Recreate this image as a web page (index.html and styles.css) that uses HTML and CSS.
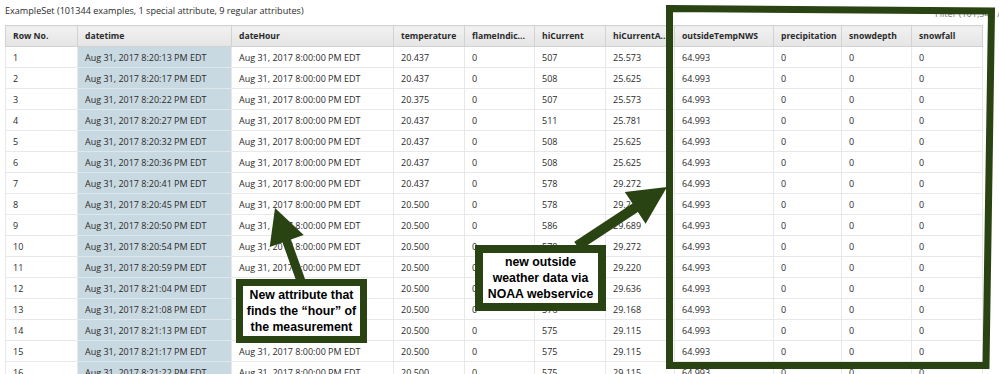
FILE: index.html
```html
<!DOCTYPE html>
<html>
<head>
<meta charset="utf-8">
<link rel="stylesheet" href="styles.css">
</head>
<body>
<div class="page">
  <div class="topbar">
    <span class="title">ExampleSet (101344 examples, 1 special attribute, 9 regular attributes)</span>
    <span class="filter">Filter (101,344 / 101,344 examples): all</span>
  </div>
  <table class="data">
    <colgroup>
      <col class="c-row"><col class="c-dt"><col class="c-dh"><col class="c-temp"><col class="c-flame"><col class="c-hi"><col class="c-hia"><col class="c-out"><col class="c-prec"><col class="c-sd"><col class="c-sf">
    </colgroup>
    <thead>
      <tr><th>Row No.</th><th>datetime</th><th>dateHour</th><th>temperature</th><th>flameIndic...</th><th>hiCurrent</th><th>hiCurrentA...</th><th>outsideTempNWS</th><th>precipitation</th><th>snowdepth</th><th>snowfall</th></tr>
    </thead>
    <tbody>
      <tr><td>1</td><td class="special">Aug 31, 2017 8:20:13 PM EDT</td><td>Aug 31, 2017 8:00:00 PM EDT</td><td>20.437</td><td>0</td><td>507</td><td>25.573</td><td>64.993</td><td>0</td><td>0</td><td>0</td></tr>
      <tr><td>2</td><td class="special">Aug 31, 2017 8:20:17 PM EDT</td><td>Aug 31, 2017 8:00:00 PM EDT</td><td>20.437</td><td>0</td><td>508</td><td>25.625</td><td>64.993</td><td>0</td><td>0</td><td>0</td></tr>
      <tr><td>3</td><td class="special">Aug 31, 2017 8:20:22 PM EDT</td><td>Aug 31, 2017 8:00:00 PM EDT</td><td>20.375</td><td>0</td><td>507</td><td>25.573</td><td>64.993</td><td>0</td><td>0</td><td>0</td></tr>
      <tr><td>4</td><td class="special">Aug 31, 2017 8:20:27 PM EDT</td><td>Aug 31, 2017 8:00:00 PM EDT</td><td>20.437</td><td>0</td><td>511</td><td>25.781</td><td>64.993</td><td>0</td><td>0</td><td>0</td></tr>
      <tr><td>5</td><td class="special">Aug 31, 2017 8:20:32 PM EDT</td><td>Aug 31, 2017 8:00:00 PM EDT</td><td>20.437</td><td>0</td><td>508</td><td>25.625</td><td>64.993</td><td>0</td><td>0</td><td>0</td></tr>
      <tr><td>6</td><td class="special">Aug 31, 2017 8:20:36 PM EDT</td><td>Aug 31, 2017 8:00:00 PM EDT</td><td>20.437</td><td>0</td><td>508</td><td>25.625</td><td>64.993</td><td>0</td><td>0</td><td>0</td></tr>
      <tr><td>7</td><td class="special">Aug 31, 2017 8:20:41 PM EDT</td><td>Aug 31, 2017 8:00:00 PM EDT</td><td>20.437</td><td>0</td><td>578</td><td>29.272</td><td>64.993</td><td>0</td><td>0</td><td>0</td></tr>
      <tr><td>8</td><td class="special">Aug 31, 2017 8:20:45 PM EDT</td><td>Aug 31, 2017 8:00:00 PM EDT</td><td>20.500</td><td>0</td><td>578</td><td>29.272</td><td>64.993</td><td>0</td><td>0</td><td>0</td></tr>
      <tr><td>9</td><td class="special">Aug 31, 2017 8:20:50 PM EDT</td><td>Aug 31, 2017 8:00:00 PM EDT</td><td>20.500</td><td>0</td><td>586</td><td>29.689</td><td>64.993</td><td>0</td><td>0</td><td>0</td></tr>
      <tr><td>10</td><td class="special">Aug 31, 2017 8:20:54 PM EDT</td><td>Aug 31, 2017 8:00:00 PM EDT</td><td>20.500</td><td>0</td><td>578</td><td>29.272</td><td>64.993</td><td>0</td><td>0</td><td>0</td></tr>
      <tr><td>11</td><td class="special">Aug 31, 2017 8:20:59 PM EDT</td><td>Aug 31, 2017 8:00:00 PM EDT</td><td>20.500</td><td>0</td><td>577</td><td>29.220</td><td>64.993</td><td>0</td><td>0</td><td>0</td></tr>
      <tr><td>12</td><td class="special">Aug 31, 2017 8:21:04 PM EDT</td><td>Aug 31, 2017 8:00:00 PM EDT</td><td>20.500</td><td>0</td><td>585</td><td>29.636</td><td>64.993</td><td>0</td><td>0</td><td>0</td></tr>
      <tr><td>13</td><td class="special">Aug 31, 2017 8:21:08 PM EDT</td><td>Aug 31, 2017 8:00:00 PM EDT</td><td>20.500</td><td>0</td><td>576</td><td>29.168</td><td>64.993</td><td>0</td><td>0</td><td>0</td></tr>
      <tr><td>14</td><td class="special">Aug 31, 2017 8:21:13 PM EDT</td><td>Aug 31, 2017 8:00:00 PM EDT</td><td>20.500</td><td>0</td><td>575</td><td>29.115</td><td>64.993</td><td>0</td><td>0</td><td>0</td></tr>
      <tr><td>15</td><td class="special">Aug 31, 2017 8:21:17 PM EDT</td><td>Aug 31, 2017 8:00:00 PM EDT</td><td>20.500</td><td>0</td><td>575</td><td>29.115</td><td>64.993</td><td>0</td><td>0</td><td>0</td></tr>
      <tr><td>16</td><td class="special">Aug 31, 2017 8:21:22 PM EDT</td><td>Aug 31, 2017 8:00:00 PM EDT</td><td>20.500</td><td>0</td><td>575</td><td>29.115</td><td>64.993</td><td>0</td><td>0</td><td>0</td></tr>
    </tbody>
  </table>

  <svg class="overlay" width="999" height="374" viewBox="0 0 999 374">
    <polygon class="frame" points="669.5,8.5 991.5,11 986,365.5 669.5,365.5"/>
    <polygon class="arrow" points="305.2,279.5 296.8,282.5 282.5,242.5 269.7,247 275,208 303.7,235 290.9,239.5"/>
    <polygon class="arrow" points="579.7,250.2 574.3,241.8 632.5,203.6 624.8,191.9 667,187 645.6,223.7 637.9,212"/>
  </svg>

  <div class="callout callout-hour">New attribute that<br>finds the “hour” of<br>the measurement</div>
  <div class="callout callout-noaa">new outside<br>weather data via<br>NOAA webservice</div>
</div>
</body>
</html>
```

FILE: styles.css
```css
html, body {
  margin: 0;
  padding: 0;
  background: #ffffff;
}

.page {
  position: relative;
  width: 999px;
  height: 374px;
  overflow: hidden;
  font-family: "Open Sans", "DejaVu Sans", sans-serif;
  color: #2a2a2a;
}

.topbar {
  display: flex;
  height: 25px;
  box-sizing: border-box;
  padding: 5px 0 0 5px;
  font-size: 9.1px;
  line-height: 12px;
  white-space: nowrap;
}

.title {
  flex: none;
  width: 930px;
  color: #2a2a2a;
}

.filter {
  flex: none;
  padding-top: 3px;
  color: #7a7a7a;
}

.data {
  margin-left: 5px;
  width: 977px;
  table-layout: fixed;
  border-collapse: collapse;
  font-size: 9px;
}

.c-row { width: 72px; }
.c-dt { width: 154px; }
.c-dh { width: 162px; }
.c-temp { width: 71px; }
.c-flame { width: 70px; }
.c-hi { width: 71px; }
.c-hia { width: 69px; }
.c-out { width: 99px; }
.c-prec { width: 68px; }
.c-sd { width: 70px; }
.c-sf { width: 71px; }

.data th {
  height: 20px;
  padding: 0 0 0 7px;
  text-align: left;
  font-weight: bold;
  font-size: 8.6px;
  color: #2a2a2a;
  background: linear-gradient(#f1f1f1, #e5e5e5);
  border: 1px solid #d2d2d2;
  white-space: nowrap;
  overflow: hidden;
}

.data td {
  height: 20px;
  padding: 0 0 0 7px;
  text-align: left;
  border: 1px solid #e8e8e8;
  white-space: nowrap;
  overflow: hidden;
  color: #2a2a2a;
}

.data td.special {
  background: #c9d9e1;
  border-bottom-color: #dde8ed;
  border-top-color: #dde8ed;
}

.overlay {
  position: absolute;
  left: 0;
  top: 0;
}

.frame {
  fill: none;
  stroke: #2a4312;
  stroke-width: 7;
  stroke-linejoin: miter;
}

.arrow {
  fill: #2a4312;
}

.callout {
  position: absolute;
  box-sizing: border-box;
  display: flex;
  align-items: center;
  justify-content: center;
  text-align: center;
  background: #ffffff;
  border: 7px solid #2a4312;
  font-family: "Liberation Sans", Arial, sans-serif;
  font-weight: bold;
  font-size: 12.3px;
  line-height: 16px;
  color: #000000;
  white-space: nowrap;
}

.callout-hour {
  left: 236px;
  top: 279px;
  width: 131px;
  height: 64px;
}

.callout-noaa {
  left: 475px;
  top: 245px;
  width: 131px;
  height: 66px;
  border-width: 8px;
}
```
